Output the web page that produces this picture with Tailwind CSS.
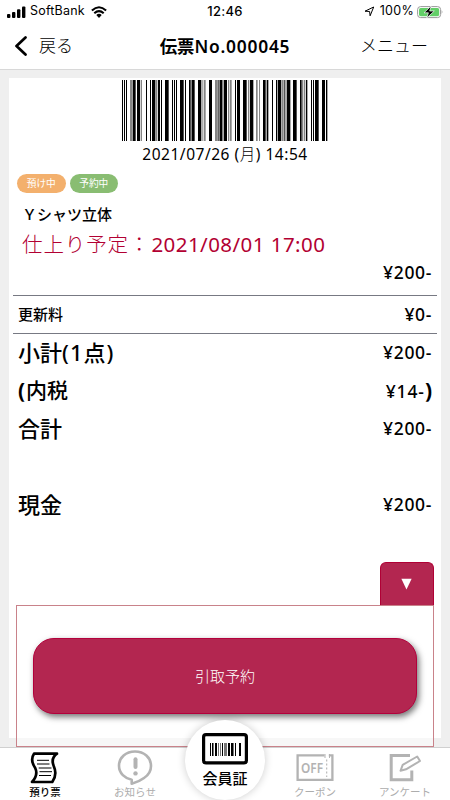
<!DOCTYPE html>
<html lang="ja">
<head>
<meta charset="utf-8">
<title>伝票No.000045</title>
<script src="https://cdn.jsdelivr.net/npm/@tailwindcss/browser@4"></script>
</head>
<body class="w-[450px] h-[800px] overflow-hidden bg-white text-black font-['Noto_Sans','Noto_Sans_CJK_JP',sans-serif]">
<div class="relative w-[450px] h-[800px] flex flex-col overflow-hidden">
  <header class="h-[70px] shrink-0 border-b border-[#d8d8d8] bg-white">
    <div class="h-[23px] grid grid-cols-3 items-center font-['Inter',sans-serif] text-[12.5px] leading-none">
      <div class="flex items-center pl-[7px]">
        <svg class="w-[19px] h-[12px]" viewBox="0 0 19 12"><rect x="0" y="8" width="3.4" height="4" rx="1"/><rect x="5" y="6" width="3.4" height="6" rx="1"/><rect x="10" y="3.3" width="3.4" height="8.7" rx="1"/><rect x="15" y="0.5" width="3.4" height="11.5" rx="1"/></svg>
        <span class="ml-[4px] w-[56px] whitespace-nowrap tracking-[0.2px]">SoftBank</span>
        <svg class="ml-[5px] w-[16px] h-[12px]" viewBox="0 0 16 12" fill="none" stroke="#000" stroke-width="2.1"><path d="M.9 4.5Q8-2 15.1 4.5M3.3 7.2Q8 3 12.7 7.2"/><path d="M5.3 9.1Q8 6.6 10.7 9.1L8 12Z" fill="#000" stroke="none"/></svg>
      </div>
      <div class="text-center font-medium text-[13px] tracking-[0.3px]">12:46</div>
      <div class="flex items-center justify-end pr-[6px]">
        <svg class="w-[11px] h-[11px]" viewBox="0 0 11 11" fill="none" stroke="#000" stroke-width="1"><path d="M1 5.2 9.7 1 6.1 9.8 5.6 5.5Z" stroke-linejoin="round"/></svg>
        <span class="ml-[5px] mr-[3px] tracking-[0.3px]">100%</span>
        <svg class="w-[27px] h-[14px]" viewBox="0 0 27 14"><rect x=".6" y="1.6" width="23" height="11" rx="3" fill="#fff" stroke="#999"/><rect x="2" y="3" width="20.2" height="8.2" rx="1.7" fill="#62cf67"/><path d="M24.7 5.1q1.6 1.9 0 3.8z" fill="#999"/><path d="M14.3.8 7 7.8h4.4L9.7 13l7.6-7h-4.6z" stroke="#fff" stroke-width=".7"/></svg>
      </div>
    </div>
    <div class="h-[46px] flex items-center justify-between pl-[14px] pr-[22px]">
      <div class="w-[120px] flex items-center text-[17px] font-light">
        <svg class="w-[14px] h-[20px] mr-[11px]" viewBox="0 0 14 20" fill="none" stroke="#000" stroke-width="2.7" stroke-linecap="round" stroke-linejoin="round"><path d="M11.5 1.5 2.5 10l9 8.5"/></svg>戻る
      </div>
      <h1 class="ml-[8px] text-[17.4px] font-semibold whitespace-nowrap">伝票<span class="tracking-[0.75px]">No.000045</span></h1>
      <div class="w-[120px] text-right text-[17px] font-light">メニュー</div>
    </div>
  </header>

  <main class="h-[677px] shrink-0 bg-[#efefef] pt-[8px] pl-[9px] pr-[9px] pb-[9px]">
    <article class="h-[660px] bg-white flex flex-col pl-[4px] pr-[4px]">
      <div class="pt-[2px] flex flex-col items-center">
        <svg class="w-[207px] h-[61px]" viewBox="36 0 621 183" preserveAspectRatio="none" aria-label="barcode">
          <path d="M36 0h3v183h-3zM42 0h3v183h-3zM48 0h3v183h-3zM68 0h9v183h-9zM81 0h9v183h-9zM108 0h3v183h-3zM120 0h3v183h-3zM126 0h10v183h-10zM144 0h6v183h-6zM153 0h3v183h-3zM165 0h11v183h-11zM186 0h3v183h-3zM192 0h3v183h-3zM198 0h3v183h-3zM210 0h11v183h-11zM225 0h3v183h-3zM237 0h5v183h-5zM246 0h8v183h-8zM264 0h9v183h-9zM297 0h9v183h-9zM323 0h3v183h-3zM330 0h6v183h-6zM342 0h9v183h-9zM375 0h3v183h-3zM381 0h9v183h-9zM399 0h11v183h-11zM420 0h10v183h-10zM459 0h8v183h-8zM470 0h5v183h-5zM486 0h3v183h-3zM498 0h4v183h-4zM504 0h9v183h-9zM523 0h3v183h-3zM530 0h11v183h-11zM549 0h11v183h-11zM570 0h5v183h-5zM588 0h4v183h-4zM603 0h3v183h-3zM609 0h3v183h-3zM615 0h11v183h-11zM636 0h9v183h-9zM648 0h4v183h-4z"/>
          <path fill="#858585" d="M60 0h7v183h-7zM92 0h4v183h-4zM137 0h5v183h-5zM243 0h3v183h-3zM274 0h4v183h-4zM281 0h6v183h-6zM315 0h7v183h-7zM326 0h4v183h-4zM336 0h5v183h-5zM354 0h4v183h-4zM360 0h5v183h-5zM414 0h4v183h-4zM438 0h5v183h-5zM447 0h3v183h-3zM514 0h7v183h-7zM576 0h4v183h-4zM582 0h4v183h-4z"/>
        </svg>
        <time class="h-[28px] leading-[27px] text-[15.5px] tracking-[0.52px] whitespace-nowrap">2021/07/26 (<span class="font-light">月</span>) 14:54</time>
      </div>

      <div class="mt-[5px] ml-[4px] flex gap-[4px] text-white text-[9.7px] leading-[19px] text-center">
        <span class="w-[48.5px] h-[18.5px] rounded-full bg-[#f3b06d]">預け中</span>
        <span class="w-[48.5px] h-[18.5px] rounded-full bg-[#89bd72]">予約中</span>
      </div>
      <h2 class="mt-[10.5px] ml-[9px] h-[24px] leading-[23px] text-[15px] font-medium">Ｙシャツ立体</h2>
      <p class="ml-[9px] h-[34px] leading-[34px] whitespace-nowrap text-[20.5px] font-light text-[#b20032]"><span class="tracking-[0.9px]">仕上り予定：</span><span class="ml-[1px] font-normal tracking-[0.45px]">2021/08/01 17:00</span></p>
      <p class="h-[35px] pr-[5px] leading-[23px] text-right text-[17.5px] font-medium tracking-[0.65px] border-b border-[#777983]">¥200-</p>

      <dl class="font-medium">
        <div class="h-[38px] px-[5px] flex items-center justify-between border-b border-[#777983]"><dt class="text-[15px]">更新料</dt><dd class="text-[17.5px] tracking-[0.65px]">¥0-</dd></div>
        <div class="h-[38px] px-[5px] pb-[1px] flex items-center justify-between"><dt class="text-[22px]">小計<span class="tracking-[1px]">(1点)</span></dt><dd class="text-[17.5px] tracking-[0.65px]">¥200-</dd></div>
        <div class="h-[38px] px-[5px] flex items-center justify-between"><dt class="text-[21px]"><b class="tracking-[0.8px]">(</b>内税</dt><dd class="text-[17.5px] tracking-[0.9px] flex items-center">¥14-<b class="text-[21px] tracking-normal">)</b></dd></div>
        <div class="h-[38px] px-[5px] pb-[1px] flex items-center justify-between"><dt class="text-[22px]">合計</dt><dd class="text-[17.5px] tracking-[0.65px]">¥200-</dd></div>
        <div class="mt-[38px] h-[38px] px-[5px] pb-[1px] flex items-center justify-between"><dt class="text-[22px]">現金</dt><dd class="text-[17.5px] tracking-[0.65px]">¥200-</dd></div>
      </dl>
    </article>
  </main>

  <section class="absolute left-[16px] top-[562px] w-[418px] flex flex-col">
    <button class="self-end w-[54px] h-[43px] rounded-t-[6px] bg-[#b32650] border border-b-0 border-[#b00035] flex items-center justify-center pr-[1px]">
      <svg class="w-[11px] h-[12px]" viewBox="0 0 12 12" fill="#fff"><path d="M.4.4h11.2L6 12z"/></svg>
    </button>
    <div class="h-[142px] border border-[#c9828a] bg-white/50 pt-[32px] px-[16px]">
      <button class="w-full h-[76px] rounded-[21px] bg-[#b32650] border border-[#b3003b] shadow-[2px_3px_6px_rgba(0,0,0,0.55)] text-white text-[15px] font-light">引取予約</button>
    </div>
  </section>

  <nav class="h-[53px] shrink-0 grid grid-cols-5 bg-white border-t border-[#d0d0d0] text-[10.5px] leading-[14px] text-[#adadad]">
    <a class="flex flex-col items-center pt-[4px] text-black font-medium">
      <svg class="w-[30px] h-[32px] mb-[1px]" viewBox="0 0 30 32" fill="none" stroke="#000"><path d="M4 1.7H27Q20.5 6.2 23.8 14.2Q27.5 22.5 22.3 30H2Q8.5 23 5.2 16Q-.2 8 4 1.7Z" stroke-width="2.7" stroke-linejoin="round"/><path d="M7 8.3H19M7 12H19.5" stroke-width="1"/><path d="M8.7 16H21.5M9.5 19.7H22M9 23.5H21" stroke-width="1"/></svg>
      <span class="leading-[14px]">預り票</span>
    </a>
    <a class="flex flex-col items-center pt-[2px]">
      <svg class="w-[36px] h-[35px]" viewBox="0 0 36 35" fill="none" stroke="#b3b3b3" stroke-width="2.6"><path d="M14.7 29.8V33.7Q22 31.8 27 28Q34 23.5 34 16C34 7.5 27 1.5 18 1.5S2 7.5 2 15.8C2 23.5 8 28.5 14.7 29.8Z" stroke-linejoin="round"/><path d="M18.5 9.2V17" stroke-width="4" stroke-linecap="round"/><circle cx="18.5" cy="23.4" r="2.2" fill="#b3b3b3" stroke="none"/></svg>
      <span>お知らせ</span>
    </a>
    <span></span>
    <a class="flex flex-col items-center pt-[5px]">
      <svg class="w-[38px] h-[29px] mb-[3px]" viewBox="0 0 38 29" fill="none" stroke="#b3b3b3" stroke-width="2.3"><path d="M28.5 2.3H1.6V26.8H36.4V2.3H32.8"/><path d="M29 1V5M33.5 1V5" stroke-width="1"/><path d="M30.7 6.5V24" stroke-width="1.1" stroke-dasharray="2 2"/><text x="5" y="19.5" textLength="22" lengthAdjust="spacingAndGlyphs" font-size="13.5" font-weight="600" fill="#b3b3b3" stroke="none" font-family="Noto Sans">OFF</text></svg>
      <span>クーポン</span>
    </a>
    <a class="flex flex-col items-center pt-[5px]">
      <svg class="w-[32px] h-[29px] mb-[3px]" viewBox="0 0 32 29" fill="none" stroke="#b3b3b3"><path d="M21 2.6H2.2V26.8H22.8V17.5" stroke-width="3"/><path d="M11.5 17.8 13.7 11.8 28.2 3.5 31 8 17 16.3Z" stroke-width="2" stroke-linejoin="round"/></svg>
      <span>アンケート</span>
    </a>
  </nav>

  <a class="absolute left-[185px] top-[720px] w-[80px] h-[80px] rounded-full bg-white shadow-[0_0_9px_rgba(0,0,0,0.2)] flex flex-col items-center pt-[13px] text-[15px] leading-[24px] font-medium">
    <svg class="w-[46px] h-[32px] shrink-0" viewBox="0 0 46 32"><rect x="1.6" y="1.6" width="42.8" height="28.3" rx="2.4" fill="#fff" stroke="#000" stroke-width="3.2"/><path d="M8 10h1v13H8zM10 10h1v13h-1zM13 10h2v13h-2zM20 10h1v13h-1zM26 10h2v13h-2zM29 10h2v13h-2zM33 10h1v13h-1zM37 10h2v13h-2z"/><path fill="#777" d="M11 10h1v13h-1zM16 10h1v13h-1zM18 10h1v13h-1zM22 10h3v13h-3zM31 10h1v13h-1z"/></svg>
    <span class="mt-[1px]">会員証</span>
  </a>
</div>
</body>
</html>
